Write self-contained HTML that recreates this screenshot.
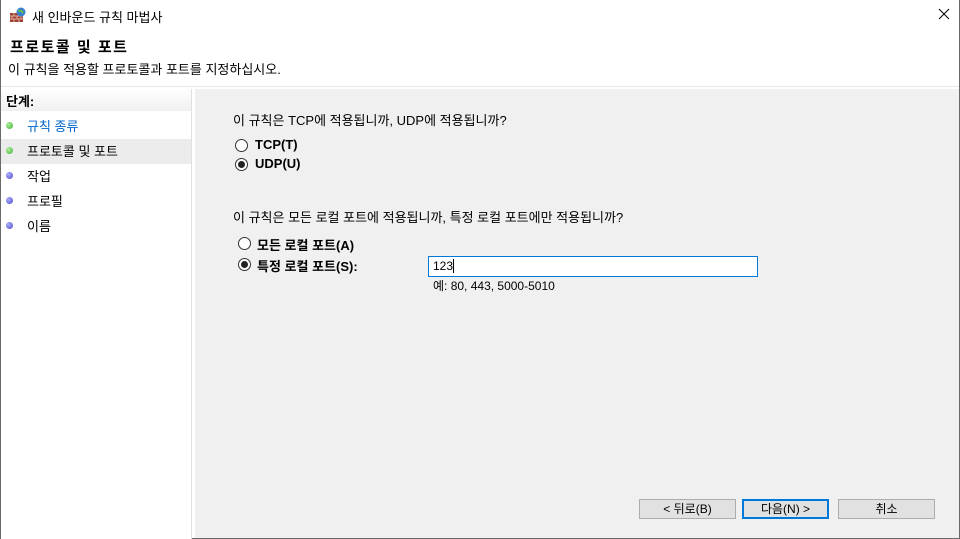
<!DOCTYPE html>
<html><head><meta charset="utf-8"><style>
*{margin:0;padding:0;box-sizing:border-box}
body{width:960px;height:539px;overflow:hidden;background:#fff;font-family:"Liberation Sans","Noto Sans CJK KR","NanumGothic",sans-serif;font-size:13px;color:#000;position:relative}
.a{position:absolute;white-space:nowrap}
.b{font-weight:bold}
.radio{position:absolute;width:13px;height:13px;border:1px solid #333;border-radius:50%;background:#fff}
.radio.on::after{content:"";position:absolute;left:2px;top:2px;width:7px;height:7px;border-radius:50%;background:#222}
.dot{position:absolute;left:6px;width:7px;height:7px;border-radius:50%}
.g{background:radial-gradient(circle at 35% 35%,#b0f0a0,#3cb030)}
.p{background:radial-gradient(circle at 35% 35%,#b0b0ff,#4848c8)}
.btn{position:absolute;top:499px;height:20px;background:#e1e1e1;border:1px solid #adadad;text-align:center;line-height:18px;font-size:12px}
</style></head><body>
<div class="a" style="left:0;top:0;width:960px;height:539px;border:1px solid #6a6a6a;border-top:none"></div>
<svg class="a" style="left:9px;top:7px" width="18" height="16" viewBox="0 0 18 16"><rect x="1" y="6" width="13" height="9" fill="#a04030"/><path d="M1 9h13M1 12h13M5 6v3M10 6v3M3 9v3M8 9v3M12 9v3M5 12v3M10 12v3" stroke="#e0b0a0" stroke-width="1"/><circle cx="12" cy="5" r="4.5" fill="#3a80d0"/><path d="M9 4c2-1 4 0 5 2" stroke="#60c040" stroke-width="2" fill="none"/></svg>
<div class="a" style="left:32px;top:7px;font-size:13px">새 인바운드 규칙 마법사</div>
<svg class="a" style="left:938px;top:8px" width="12" height="12"><path d="M1 1L11 11M11 1L1 11" stroke="#000" stroke-width="1"/></svg>
<div class="a b" style="left:10px;top:36px;font-size:15px;letter-spacing:1.5px">프로토콜 및 포트</div>
<div class="a" style="left:8px;top:59px;font-size:13px">이 규칙을 적용할 프로토콜과 포트를 지정하십시오.</div>
<div class="a" style="left:1px;top:86px;width:958px;height:1px;background:#e6e6e6"></div>
<div class="a" style="left:1px;top:89px;width:191px;height:450px;border-right:1px solid #e0e0e0;background:#fff"></div>
<div class="a" style="left:1px;top:89px;width:190px;height:22px;background:linear-gradient(#fff,#f0f0f0)"></div>
<div class="a b" style="left:6px;top:91px">단계:</div>
<div class="a" style="left:1px;top:139px;width:190px;height:25px;background:#ececec"></div>
<div class="dot g" style="top:122px"></div><div class="a" style="left:27px;top:116px;color:#0066cc">규칙 종류</div>
<div class="dot g" style="top:147px"></div><div class="a" style="left:27px;top:141px">프로토콜 및 포트</div>
<div class="dot p" style="top:172px"></div><div class="a" style="left:27px;top:166px">작업</div>
<div class="dot p" style="top:197px"></div><div class="a" style="left:27px;top:191px">프로필</div>
<div class="dot p" style="top:222px"></div><div class="a" style="left:27px;top:216px">이름</div>
<div class="a" style="left:195px;top:89px;width:764px;height:449px;background:#f0f0f0"></div>
<div class="a" style="left:233px;top:110px">이 규칙은 TCP에 적용됩니까, UDP에 적용됩니까?</div>
<div class="radio" style="left:235px;top:139px"></div><div class="a b" style="left:255px;top:137px">TCP(T)</div>
<div class="radio on" style="left:235px;top:158px"></div><div class="a b" style="left:255px;top:156px">UDP(U)</div>
<div class="a" style="left:233px;top:207px">이 규칙은 모든 로컬 포트에 적용됩니까, 특정 로컬 포트에만 적용됩니까?</div>
<div class="radio" style="left:238px;top:237px"></div><div class="a b" style="left:257px;top:235px">모든 로컬 포트(A)</div>
<div class="radio on" style="left:238px;top:258px"></div><div class="a b" style="left:257px;top:256px">특정 로컬 포트(S):</div>
<div class="a" style="left:428px;top:256px;width:330px;height:21px;background:#fff;border:1px solid #0078d7;padding:2px 4px;font-size:12px">123<span style="border-left:1px solid #000"></span></div>
<div class="a" style="left:433px;top:277px;font-size:12px">예: 80, 443, 5000-5010</div>
<div class="btn" style="left:639px;width:97px">&lt; 뒤로(B)</div>
<div class="btn" style="left:742px;width:87px;border:2px solid #0078d7;line-height:16px">다음(N) &gt;</div>
<div class="btn" style="left:838px;width:97px">취소</div>
</body></html>
